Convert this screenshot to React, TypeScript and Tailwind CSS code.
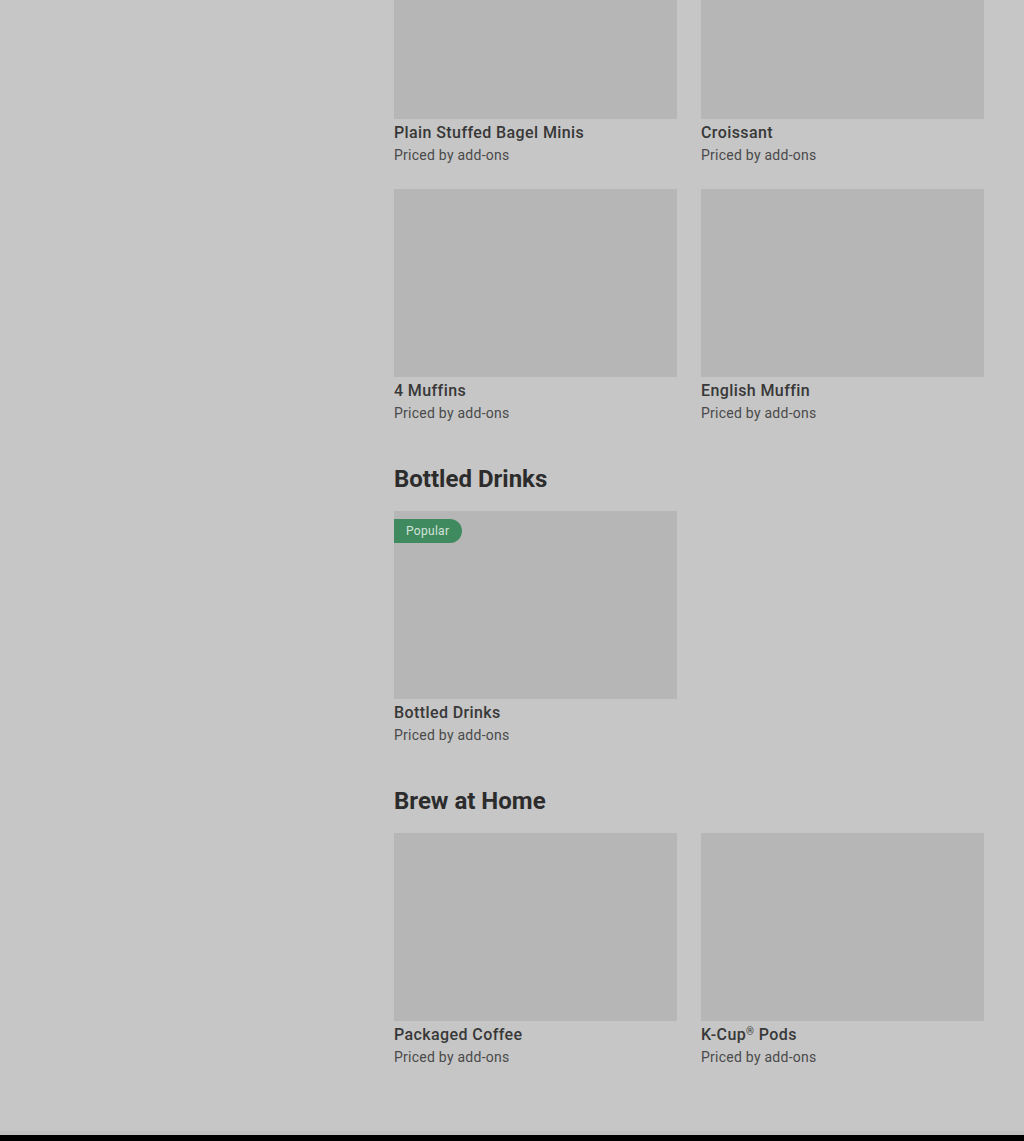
import React from 'react';

interface Item {
  name: React.ReactNode;
  key: string;
  popular?: boolean;
}

interface Section {
  title?: string;
  items: Item[];
}

const sections: Section[] = [
  {
    items: [
      { key: 'bagel', name: 'Plain Stuffed Bagel Minis' },
      { key: 'croissant', name: 'Croissant' },
      { key: 'muffins', name: '4 Muffins' },
      { key: 'english', name: 'English Muffin' },
    ],
  },
  {
    title: 'Bottled Drinks',
    items: [{ key: 'bottled', name: 'Bottled Drinks', popular: true }],
  },
  {
    title: 'Brew at Home',
    items: [
      { key: 'packaged', name: 'Packaged Coffee' },
      {
        key: 'kcup',
        name: (
          <>
            K-Cup<span className="relative -top-[5px] text-[10px] leading-none">®</span> Pods
          </>
        ),
      },
    ],
  },
];

const ItemCard: React.FC<{ item: Item }> = ({ item }) => (
  <div className="flex flex-col">
    <div className="relative h-[188px] bg-[#b6b6b6]">
      {item.popular && (
        <span className="absolute left-0 top-2 h-6 pl-3 pr-[13px] flex items-center rounded-r-full bg-[#408a5f] text-[12px] tracking-[0.3px] text-[#d3e3d9]">
          Popular
        </span>
      )}
    </div>
    <div className="mt-[2px] h-6 text-[16px] leading-6 font-medium tracking-[0.4px] text-[#383838]">{item.name}</div>
    <div className="text-[14px] leading-5 tracking-[0.25px] text-[#4a4a4a]">Priced by add-ons</div>
  </div>
);

export default function App() {
  return (
    <div className="h-[1141px] bg-[#c6c6c6] flex flex-col overflow-hidden font-['Roboto','Noto_Sans',sans-serif]">
      <div className="flex flex-1 min-h-0">
        {/* empty sidebar area */}
        <div className="w-[394px] shrink-0" />

        <main className="w-[590px] -mt-[69px]">
          {sections.map((section, i) => (
            <section key={i} className={section.title ? 'pt-10' : ''}>
              {section.title && (
                <h2 className="mb-4 text-[24px] leading-8 font-bold text-[#2c2c2c]">
                  {section.title}
                </h2>
              )}
              <div className="grid grid-cols-2 gap-x-6 gap-y-6">
                {section.items.map((item) => (
                  <ItemCard key={item.key} item={item} />
                ))}
              </div>
            </section>
          ))}
        </main>
      </div>

      <div className="h-[4px] bg-[#c0c0c0]" />
      <div className="h-[6px] bg-black" />
    </div>
  );
}
